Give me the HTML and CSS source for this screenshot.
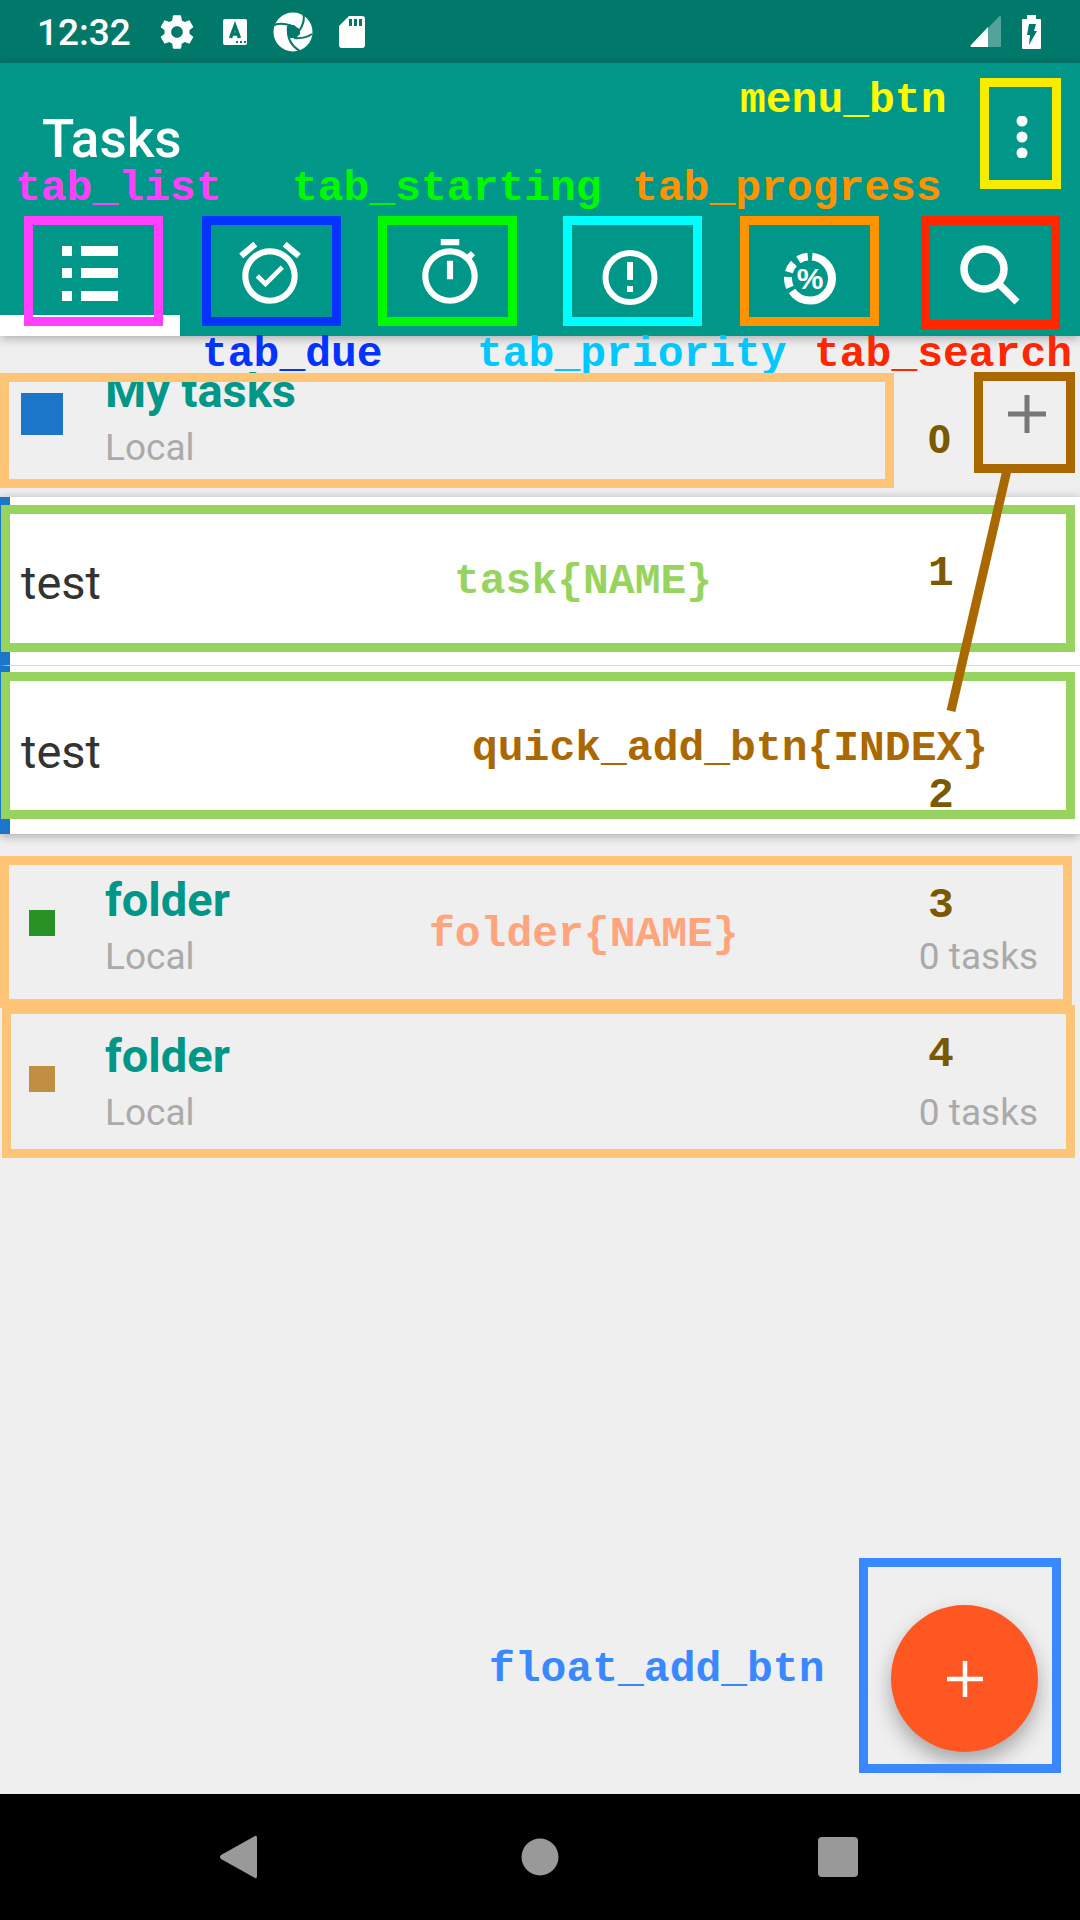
FILE: index.html
```html
<!DOCTYPE html>
<html lang="en">
<head>
<meta charset="utf-8">
<meta name="viewport" content="width=device-width, initial-scale=1">
<title>Tasks</title>
<link rel="stylesheet" href="styles.css">
</head>
<body>
<div class="screen">
  <div class="status-bar">
    <div class="status-group">
      <span class="clock">12:32</span>
      <svg class="icon-40" viewBox="0 0 24 24" aria-hidden="true"><path fill="#fff" d="M19.43 12.98c.04-.32.07-.64.07-.98s-.03-.66-.07-.98l2.11-1.65c.19-.15.24-.42.12-.64l-2-3.46c-.12-.22-.39-.3-.61-.22l-2.49 1c-.52-.4-1.08-.73-1.69-.98l-.38-2.65C14.46 2.18 14.25 2 14 2h-4c-.25 0-.46.18-.49.42l-.38 2.65c-.61.25-1.17.59-1.69.98l-2.49-1c-.23-.09-.49 0-.61.22l-2 3.46c-.13.22-.07.49.12.64l2.11 1.65c-.04.32-.07.65-.07.98s.03.66.07.98l-2.11 1.65c-.19.15-.24.42-.12.64l2 3.46c.12.22.39.3.61.22l2.49-1c.52.4 1.08.73 1.69.98l.38 2.65c.03.24.24.42.49.42h4c.25 0 .46-.18.49-.42l.38-2.65c.61-.25 1.17-.59 1.69-.98l2.49 1c.23.09.49 0 .61-.22l2-3.46c.12-.22.07-.49-.12-.64l-2.11-1.65zM12 15.5c-1.930 0-3.500-1.570-3.500-3.500s1.570-3.500 3.500-3.500 3.500 1.570 3.500 3.500-1.570 3.500-3.500 3.500z"/></svg>
      <svg class="icon-24" viewBox="0 0 24 28" aria-hidden="true"><rect y="1" width="24" height="26" rx="2" fill="#fff"/><path d="M7.500 20 12 8 16.500 20M9 16h6" fill="none" stroke="#00796b" stroke-width="3.500"/><path d="M13 24h2M17 24h2M21 24h2" stroke="#00796b" stroke-width="2"/></svg>
      <svg class="icon-40" viewBox="0 0 40 40" aria-hidden="true"><circle cx="20" cy="20" r="19.500" fill="#fff"/><path d="M15 14 21 13 27 18 27 22 23 26 17 26 14 20z" fill="#00796b"/><path d="M1 13Q13 9 26 18M30 1Q33 9 26 19M39 22Q32 27 21 26M27 39Q13 31 15 14" fill="none" stroke="#00796b" stroke-width="2"/></svg>
      <svg class="icon-26" viewBox="0 0 26 34" aria-hidden="true"><path d="M10 1H23Q26 1 26 4V30Q26 33 23 33H3Q0 33 0 30V11z" fill="#fff"/><path d="M11.500 4v7M16.500 4v7M21.500 4v7" stroke="#00796b" stroke-width="3"/></svg>
    </div>
    <div class="status-group status-group-end">
      <svg class="icon-32" viewBox="0 0 32 34" aria-hidden="true"><path d="M18 13 29 1.500Q31 0 31 3V31Q31 32 30 32H18z" fill="#fff" opacity=".32"/><path d="M18 12V32H1Q0 31 1 30z" fill="#fff"/></svg>
      <svg class="icon-20" viewBox="0 0 20 34" aria-hidden="true"><path d="M5 0h9v4h4q1 0 1 1v28q0 1-1 1H1q-1 0-1-1V5q0-1 1-1h4z" fill="#fff"/><path d="M7 9h7l-2 7h3L7 30l1-10H5z" fill="#00796b"/></svg>
    </div>
  </div>

  <header class="app-bar">
    <div class="toolbar">
      <h1 class="title">Tasks</h1>
      <button class="menu-button" aria-label="More options">
        <svg class="icon-42" viewBox="0 0 42 42" aria-hidden="true"><g fill="#fff"><circle cx="21" cy="5" r="5.500"/><circle cx="21" cy="21" r="5.500"/><circle cx="21" cy="37" r="5.500"/></g></svg>
      </button>
    </div>
    <nav class="tabs">
      <button class="tab tab-active" aria-label="List"><svg class="icon-74" viewBox="0 0 74 74"><g fill="#fff"><path d="M9 10h10v10H9zM9 32h10v10H9zM9 55h10v10H9zM28 10h37v10H28zM28 32h37v10H28zM28 55h37v10H28z"/></g></svg></button>
      <button class="tab" aria-label="Due"><svg class="icon-74" viewBox="0 0 24 24"><path fill="#fff" d="M22 5.720l-4.600-3.860-1.290 1.530 4.600 3.860L22 5.720zM7.880 3.390 6.600 1.860 2 5.710l1.290 1.530 4.590-3.850zM12 4c-4.970 0-9 4.030-9 9s4.020 9 9 9c4.970 0 9-4.030 9-9s-4.030-9-9-9zm0 16c-3.870 0-7-3.130-7-7s3.130-7 7-7 7 3.130 7 7-3.130 7-7 7zm-1.460-5.470L8.410 12.400l-1.060 1.060 3.180 3.180 6-6-1.060-1.060-4.930 4.950z"/></svg></button>
      <button class="tab" aria-label="Starting"><svg class="icon-74" viewBox="0 0 24 24"><path fill="#fff" d="M15 1H9v2h6V1zm-4 13h2V8h-2v6zm8.030-6.610 1.120-1.120-1.410-1.410-1.120 1.120C16.070 4.740 14.120 4 12 4c-4.970 0-9 4.030-9 9s4.020 9 9 9 9-4.030 9-9c0-2.120-.74-4.070-1.970-5.610zM12 20c-3.870 0-7-3.130-7-7s3.130-7 7-7 7 3.130 7 7-3.130 7-7 7z"/></svg></button>
      <button class="tab" aria-label="Priority"><svg class="icon-74" viewBox="0 0 74 74"><circle cx="37" cy="41.500" r="24.500" fill="none" stroke="#fff" stroke-width="6"/><path fill="#fff" d="M34 26h6v18h-6zM34 50h6v6h-6z"/></svg></button>
      <button class="tab" aria-label="Progress"><svg class="icon-74" viewBox="0 0 74 74"><circle cx="37" cy="42.500" r="22" fill="none" stroke="#fff" stroke-width="8" pathLength="360" stroke-dasharray="0 6 229 11 28 13 26 15 26 6" transform="rotate(-90 37 42.500)"/><text class="percent" x="37" y="53" text-anchor="middle">%</text></svg></button>
      <button class="tab" aria-label="Search"><svg class="icon-74" viewBox="0 0 74 74"><circle cx="31" cy="33" r="20" fill="none" stroke="#fff" stroke-width="7.500"/><path d="M45 47 64 66" stroke="#fff" stroke-width="7"/></svg></button>
    </nav>
  </header>

  <main class="content">
    <section class="folder">
      <span class="swatch swatch-open"></span>
      <div class="folder-text"><h2 class="folder-name">My tasks</h2><p class="folder-account">Local</p></div>
      <button class="quick-add" aria-label="Add task to My tasks"><svg class="icon-42" viewBox="0 0 42 42" aria-hidden="true"><path d="M21 2v38M2 21h38" stroke="#777" stroke-width="5"/></svg></button>
    </section>
    <ul class="tasks">
      <li class="task">test</li>
      <li class="task">test</li>
    </ul>
    <section class="folder">
      <span class="swatch swatch-green"></span>
      <div class="folder-text"><h2 class="folder-name">folder</h2><p class="folder-account">Local</p></div>
      <span class="folder-count">0 tasks</span>
    </section>
    <section class="folder">
      <span class="swatch swatch-tan"></span>
      <div class="folder-text"><h2 class="folder-name">folder</h2><p class="folder-account">Local</p></div>
      <span class="folder-count">0 tasks</span>
    </section>
    <button class="fab" aria-label="Add task"><svg class="icon-42" viewBox="0 0 42 42" aria-hidden="true"><path d="M21 3v36M3 21h36" stroke="#fff" stroke-width="4.500"/></svg></button>
  </main>

  <footer class="nav-bar">
    <button class="nav-button" aria-label="Back"><svg class="icon-48" viewBox="0 0 48 48"><path d="M37 3q2-1 2 2v38q0 3-2 2L3 26q-2-2 0-4z" fill="#999"/></svg></button>
    <button class="nav-button" aria-label="Home"><svg class="icon-48" viewBox="0 0 48 48"><circle cx="24" cy="24" r="18.500" fill="#999"/></svg></button>
    <button class="nav-button" aria-label="Recents"><svg class="icon-48" viewBox="0 0 48 48"><rect x="4" y="4" width="40" height="40" rx="4" fill="#999"/></svg></button>
  </footer>

  <!-- Callouts naming each control, laid over the screen -->
  <div class="notes">
    <span class="note note-menu">menu_btn</span>
    <span class="note note-list">tab_list</span>
    <span class="note note-starting">tab_starting</span>
    <span class="note note-progress">tab_progress</span>
    <span class="note note-due">tab_due</span>
    <span class="note note-priority">tab_priority</span>
    <span class="note note-search">tab_search</span>
    <span class="note note-task">task{NAME}</span>
    <span class="note note-quick">quick_add_btn{INDEX}</span>
    <span class="note note-folder">folder{NAME}</span>
    <span class="note note-float">float_add_btn</span>
    <span class="note note-index index-0">0</span>
    <span class="note note-index index-1">1</span>
    <span class="note note-index index-2">2</span>
    <span class="note note-index index-3">3</span>
    <span class="note note-index index-4">4</span>
    <div class="box box-menu"></div>
    <div class="box box-list"></div>
    <div class="box box-due"></div>
    <div class="box box-starting"></div>
    <div class="box box-priority"></div>
    <div class="box box-progress"></div>
    <div class="box box-search"></div>
    <div class="box box-folder box-folder-0"></div>
    <div class="box box-task box-task-1"></div>
    <div class="box box-task box-task-2"></div>
    <div class="box box-folder box-folder-3"></div>
    <div class="box box-folder box-folder-4"></div>
    <div class="box box-quick"></div>
    <div class="box box-float"></div>
    <svg class="pointer" viewBox="0 0 70 244" aria-hidden="true"><path d="M63 0 7 241" stroke="#aa6900" stroke-width="9"/></svg>
  </div>
</div>
</body>
</html>
```
FILE: styles.css
```css
* { box-sizing: border-box; }

body {
  margin: 0;
  background: #efefef;
  font-family: Roboto, "Liberation Sans", sans-serif;
}

h1, h2, p, ul { margin: 0; padding: 0; }

button {
  border: 0;
  padding: 0;
  background: none;
  display: flex;
  align-items: center;
  justify-content: center;
}

svg { display: block; flex: none; }

.screen {
  position: relative;
  min-height: 100vh;
  display: flex;
  flex-direction: column;
  overflow: hidden;
}

.icon-20 { width: 20px; height: 34px; }
.icon-24 { width: 24px; height: 28px; }
.icon-26 { width: 26px; height: 34px; }
.icon-32 { width: 32px; height: 34px; }
.icon-40 { width: 40px; height: 40px; }
.icon-42 { width: 42px; height: 42px; }
.icon-48 { width: 48px; height: 48px; }
.icon-74 { width: 74px; height: 74px; }

/* Status bar */
.status-bar {
  height: 63px;
  padding: 0 38px 0 37px;
  display: flex;
  align-items: center;
  justify-content: space-between;
  background: #00796b;
  color: #fff;
}

.status-group { display: flex; align-items: center; gap: 26px; }
.status-group-end { gap: 20px; }

.clock {
  font-size: 37px;
  line-height: 44px;
  font-weight: 500;
  padding-top: 2px;
}

/* App bar */
.app-bar {
  position: relative;
  background: #009688;
  box-shadow: 0 2px 10px rgba(0, 0, 0, .3);
}

.toolbar {
  height: 147px;
  padding: 0 16px 0 42px;
  display: flex;
  align-items: center;
  justify-content: space-between;
}

.title {
  color: #fff;
  font-size: 53px;
  line-height: 64px;
  font-weight: 500;
  padding-top: 4px;
}

.menu-button { width: 84px; height: 126px; }

.tabs { display: flex; height: 126px; }
.tab { flex: 1; }
.tab-active { box-shadow: inset 0 -21px #fff; }

.percent {
  fill: #fff;
  font-size: 30px;
  font-weight: 700;
}

/* Folder list */
.content { position: relative; flex: 1; }

.folder {
  height: 156px;
  padding: 0 42px 0 21px;
  display: flex;
  align-items: center;
}

.swatch {
  flex: none;
  width: 26px;
  height: 26px;
  margin: 0 8px;
}

.swatch-open { width: 42px; height: 42px; margin: 0; background: #1b76c9; }
.swatch-green { background: #289225; }
.swatch-tan { background: #c08f42; }

.folder-text {
  flex: 1;
  display: flex;
  flex-direction: column;
  gap: 7px;
  padding: 5px 0 0 42px;
}

.folder-name {
  color: #009688;
  font-size: 47px;
  line-height: 56px;
  font-weight: 700;
}

.folder-account,
.folder-count {
  color: #aaa;
  font-size: 37px;
  line-height: 44px;
}

.folder-count { align-self: flex-end; margin-bottom: 22px; }

.quick-add { width: 84px; height: 84px; margin-right: -31px; }

.tasks {
  list-style: none;
  margin: 5px 0 11px;
  background: #fff;
  box-shadow: 0 2px 10px rgba(0, 0, 0, .3);
}

.task {
  height: 168px;
  padding: 4px 11px 0;
  border-left: 10px solid #1b76c9;
  display: flex;
  align-items: center;
  color: #333;
  font-size: 47px;
  line-height: 56px;
}

.task + .task { height: 169px; border-top: 1px solid #d8d8d8; }

.fab {
  position: absolute;
  right: 42px;
  bottom: 42px;
  width: 147px;
  height: 147px;
  border-radius: 50%;
  background: #ff5722;
  box-shadow: 0 10px 20px rgba(0, 0, 0, .3);
}

/* System navigation */
.nav-bar {
  height: 126px;
  display: flex;
  align-items: center;
  justify-content: center;
  gap: 250px;
  background: #000;
}

/* Callouts */
.notes {
  position: absolute;
  inset: 0;
  pointer-events: none;
}

.note {
  position: absolute;
  font-family: "Liberation Mono", monospace;
  font-size: 43px;
  line-height: 50px;
  font-weight: 700;
  white-space: nowrap;
}

.note-menu { left: 740px; top: 76px; color: #fffb00; }
.note-list { left: 15px; top: 164px; color: #ff40ff; }
.note-starting { left: 292px; top: 164px; color: #00f900; }
.note-progress { left: 632px; top: 164px; color: #ff9300; }
.note-due { left: 202px; top: 330px; color: #0433ff; }
.note-priority { left: 477px; top: 330px; color: #00c8ff; }
.note-search { left: 814px; top: 330px; color: #ff2600; }
.note-task { left: 454px; top: 557px; color: #97d45f; }
.note-quick { left: 472px; top: 724px; color: #aa6900; }
.note-folder { left: 429px; top: 910px; color: #ffa57d; }
.note-float { left: 489px; top: 1645px; color: #3a88fe; }

.note-index { left: 928px; color: #7a5900; }
.index-0 { top: 413px; font-family: "Open Sans", sans-serif; font-size: 40px; }
.index-1 { top: 549px; }
.index-2 { top: 771px; }
.index-3 { top: 881px; }
.index-4 { top: 1030px; }

.box { position: absolute; border: 9px solid; }

.box-menu { left: 980px; top: 78px; width: 81px; height: 111px; color: #f6ec00; }

.box-list, .box-due, .box-starting, .box-priority, .box-progress, .box-search {
  top: 216px;
  width: 139px;
  height: 110px;
}

.box-list { left: 24px; color: #ff40ff; }
.box-due { left: 202px; color: #0433ff; }
.box-starting { left: 378px; color: #00f900; }
.box-priority { left: 563px; color: #00fdff; }
.box-progress { left: 740px; color: #ff9300; }
.box-search { left: 921px; height: 113px; color: #ff2600; }

.box-folder { left: 0; right: 8px; color: #ffc576; }
.box-folder-0 { top: 373px; height: 115px; right: 186px; }
.box-folder-3 { top: 856px; height: 152px; }
.box-folder-4 { left: 2px; right: 5px; top: 1005px; height: 153px; }

.box-task { left: 1px; right: 5px; height: 147px; color: #97d45f; }
.box-task-1 { top: 505px; }
.box-task-2 { top: 672px; }

.box-quick { left: 974px; top: 372px; width: 101px; height: 101px; color: #aa6900; }
.box-float { left: 859px; top: 1558px; width: 202px; height: 215px; color: #3a88fe; }

.pointer { position: absolute; left: 944px; top: 470px; width: 70px; height: 244px; }
```
